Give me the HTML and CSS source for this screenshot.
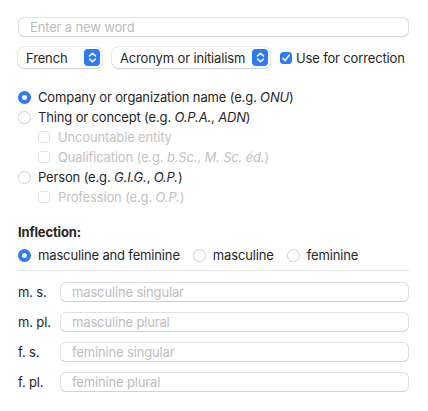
FILE: index.html
```html
<!DOCTYPE html>
<html>
<head>
<meta charset="utf-8">
<link rel="stylesheet" href="styles.css">
</head>
<body>
<div class="panel">
  <div class="field word"><span class="ph">Enter a new word</span></div>

  <div class="controls">
    <div class="popup french"><span>French</span><span class="stepper"><svg width="9" height="11" viewBox="0 0 9 11"><path d="M1.5 4 L4.5 1.2 L7.5 4 M1.5 7 L4.5 9.8 L7.5 7" fill="none" stroke="#fff" stroke-width="1.5" stroke-linecap="round" stroke-linejoin="round"/></svg></span></div>
    <div class="popup kind"><span>Acronym or initialism</span><span class="stepper"><svg width="9" height="11" viewBox="0 0 9 11"><path d="M1.5 4 L4.5 1.2 L7.5 4 M1.5 7 L4.5 9.8 L7.5 7" fill="none" stroke="#fff" stroke-width="1.5" stroke-linecap="round" stroke-linejoin="round"/></svg></span></div>
    <label class="check"><span class="box on"><svg width="10" height="10" viewBox="0 0 10 10"><path d="M2 5.3 L4.1 7.6 L8.2 2.3" fill="none" stroke="#fff" stroke-width="1.6" stroke-linecap="round" stroke-linejoin="round"/></svg></span><span>Use for correction</span></label>
  </div>

  <div class="options">
    <div class="opt"><span class="radio on"></span><span>Company or organization name (e.g. <i>ONU</i>)</span></div>
    <div class="opt"><span class="radio"></span><span>Thing or concept (e.g. <i>O.P.A.</i>, <i>ADN</i>)</span></div>
    <div class="opt sub dis"><span class="box"></span><span>Uncountable entity</span></div>
    <div class="opt sub dis"><span class="box"></span><span>Qualification (e.g. <i>b.Sc.</i>, <i>M. Sc. éd.</i>)</span></div>
    <div class="opt"><span class="radio"></span><span>Person (e.g. <i>G.I.G.</i>, <i>O.P.</i>)</span></div>
    <div class="opt sub dis"><span class="box"></span><span>Profession (e.g. <i>O.P.</i>)</span></div>
  </div>

  <div class="heading">Inflection:</div>
  <div class="inflect">
    <div class="opt"><span class="radio on"></span><span>masculine and feminine</span></div>
    <div class="opt"><span class="radio"></span><span>masculine</span></div>
    <div class="opt"><span class="radio"></span><span>feminine</span></div>
  </div>
  <div class="divider"></div>

  <div class="forms">
    <div class="formrow"><span class="lbl">m. s.</span><div class="field"><span class="ph">masculine singular</span></div></div>
    <div class="formrow"><span class="lbl">m. pl.</span><div class="field"><span class="ph">masculine plural</span></div></div>
    <div class="formrow"><span class="lbl">f. s.</span><div class="field"><span class="ph">feminine singular</span></div></div>
    <div class="formrow"><span class="lbl">f. pl.</span><div class="field"><span class="ph">feminine plural</span></div></div>
  </div>
</div>
</body>
</html>
```

FILE: styles.css
```css
* { box-sizing: border-box; }
html, body { margin: 0; padding: 0; background: #ffffff; }
body {
  font-family: Inter, "Liberation Sans", sans-serif;
  font-size: 13px;
  letter-spacing: -0.15px;
  color: #262626;
}
.panel {
  width: 428px;
  padding: 17px 19px 0 18px;
  display: flex;
  flex-direction: column;
}
.field {
  height: 20px;
  border: 1px solid #e0e0e0;
  border-bottom-color: #d2d2d2;
  border-radius: 6px;
  background: #fff;
  display: flex;
  align-items: center;
  padding-left: 11px;
  flex: 1;
}
.ph { color: #bdbdbd; }
.word { flex: none; }

.controls {
  margin-top: 10px;
  height: 21px;
  display: flex;
  align-items: center;
  gap: 10px;
}
.popup {
  height: 21px;
  border-radius: 6px;
  background: #fff;
  box-shadow: 0 0 0 0.5px rgba(0,0,0,0.16), 0 1px 1.5px rgba(0,0,0,0.12);
  display: flex;
  align-items: center;
  justify-content: space-between;
  padding: 0 2px 0 8px;
}
.french { width: 84px; }
.kind { width: 158px; }
.stepper {
  width: 16px;
  height: 17px;
  border-radius: 4px;
  background: #2f7bf5;
  display: flex;
  align-items: center;
  justify-content: center;
}
.check {
  display: flex;
  align-items: center;
  gap: 4px;
}
.box {
  width: 12px;
  height: 12px;
  border-radius: 3px;
  border: 1px solid #c8c8c8;
  background: #fff;
  display: flex;
  align-items: center;
  justify-content: center;
  flex: none;
}
.box.on { background: #2f7bf5; border-color: #2f7bf5; }

.options {
  margin-top: 19px;
  display: flex;
  flex-direction: column;
}
.opt {
  height: 20px;
  display: flex;
  align-items: center;
  gap: 7px;
}
.opt.sub { padding-left: 20px; gap: 8px; }
.dis { color: #c2c2c2; }
.dis .box { border-color: #e2e2e2; }
.radio {
  width: 13px;
  height: 13px;
  border-radius: 50%;
  border: 1px solid #d4d4d4;
  background: #fff;
  flex: none;
  box-shadow: 0 0.5px 1px rgba(0,0,0,0.06);
}
.radio.on {
  border: 4px solid #2f7bf5;
  background: #fff;
}

.heading {
  margin-top: 15px;
  height: 20px;
  display: flex;
  align-items: center;
  font-weight: 700;
}
.inflect {
  margin-top: 3px;
  display: flex;
  gap: 13px;
}
.divider {
  margin-top: 5px;
  height: 1px;
  background: #e2e2e2;
}
.forms {
  margin-top: 11px;
  display: flex;
  flex-direction: column;
  gap: 10px;
}
.formrow {
  display: flex;
  align-items: center;
}
.lbl { width: 42px; flex: none; }
```
